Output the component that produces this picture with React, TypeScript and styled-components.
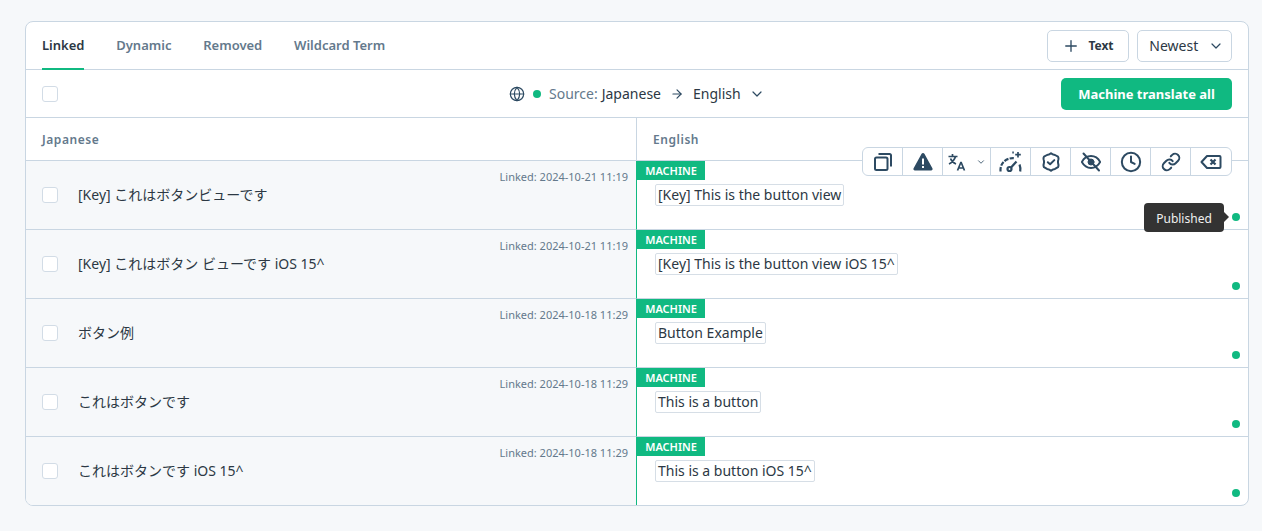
import React from "react";
import styled, { createGlobalStyle } from "styled-components";
import { Plus, ChevronDown, ArrowRight, Globe, Clock, Link as LinkIcon } from "lucide-react";

const border = "#c9d6e2";
const green = "#10b981";
const ink = "#2c3844";
const muted = "#64798c";
const iconInk = "#2d4a62";

const Global = createGlobalStyle`
  * { box-sizing: border-box; }
  html, body { margin: 0; background: #f6f8fa; }
  body { font-family: "Noto Sans", "Noto Sans CJK JP", sans-serif; color: ${ink}; }
`;

const Page = styled.div`
  width: 1262px;
  height: 531px;
  padding: 21px 13px 25px 25px;
`;
const Card = styled.div`
  position: relative;
  width: 1224px;
  height: 485px;
  border: 1px solid ${border};
  border-radius: 8px;
  background: #fff;
  overflow: hidden;
`;
const TabBar = styled.div`
  height: 48px;
  padding: 0 16px;
  display: flex;
  align-items: stretch;
  justify-content: space-between;
  border-bottom: 1px solid ${border};
`;
const Tabs = styled.div`
  display: flex;
  gap: 31.75px;
`;
const Tab = styled.div<{ $active?: boolean }>`
  display: flex;
  align-items: center;
  font-size: 13px;
  font-weight: 600;
  height: 48px;
  color: ${(p) => (p.$active ? ink : muted)};
  border-bottom: 2px solid ${(p) => (p.$active ? green : "transparent")};
`;
const TabActions = styled.div`
  display: flex;
  align-items: center;
  gap: 8px;
`;
const OutlineButton = styled.div<{ $w: number }>`
  width: ${(p) => p.$w}px;
  height: 32px;
  border: 1px solid ${border};
  border-radius: 5px;
  display: flex;
  align-items: center;
  justify-content: center;
  background: #fff;
`;
const TextLabel = styled.span`
  font-size: 12px;
  font-weight: 700;
  margin-left: 8px;
`;
const SortLabel = styled.span`
  font-size: 14px;
  margin: 0 9.5px 0 4px;
`;
const SourceBar = styled.div`
  position: relative;
  height: 48px;
  padding: 0 16px;
  display: flex;
  align-items: center;
  justify-content: space-between;
  border-bottom: 1px solid ${border};
`;
const Check = styled.span`
  flex: none;
  width: 16px;
  height: 16px;
  border: 1px solid #d2dce6;
  border-radius: 3px;
  background: #fff;
`;
const LangGroup = styled.div`
  position: absolute;
  left: 483px;
  top: 0;
  height: 47px;
  display: flex;
  align-items: center;
  font-size: 14px;
  white-space: nowrap;
`;
const Dot = styled.span`
  flex: none;
  width: 8px;
  height: 8px;
  border-radius: 50%;
  background: ${green};
`;
const SourceLabel = styled.span`
  color: ${muted};
  margin: 0 4px 0 8px;
`;
const MachineAll = styled.div`
  width: 171px;
  height: 32px;
  border-radius: 5px;
  background: ${green};
  color: #fff;
  font-size: 13px;
  font-weight: 700;
  display: flex;
  align-items: center;
  justify-content: center;
`;
const Grid = styled.div`
  display: grid;
  grid-template-columns: 610px 1fr;
`;
const HeadCell = styled.div<{ $right?: boolean }>`
  height: 43px;
  display: flex;
  align-items: center;
  padding-left: 16px;
  font-size: 12px;
  font-weight: 600;
  letter-spacing: 0.55px;
  color: ${muted};
  border-bottom: 1px solid ${border};
  border-left: ${(p) => (p.$right ? `1px solid ${border}` : "none")};
`;
const LeftCell = styled.div<{ $last?: boolean }>`
  position: relative;
  height: ${(p) => (p.$last ? 68 : 69)}px;
  background: #f6f8fa;
  display: flex;
  align-items: center;
  padding: 0 0 0 16px;
  gap: 20px;
  font-size: 14px;
  border-bottom: ${(p) => (p.$last ? "none" : `1px solid ${border}`)};
`;
const RowText = styled.span`
  position: relative;
  top: -1px;
`;
const Linked = styled.span`
  position: absolute;
  top: 8px;
  right: 8px;
  font-size: 11px;
  color: ${muted};
`;
const RightCell = styled.div<{ $last?: boolean }>`
  position: relative;
  height: ${(p) => (p.$last ? 68 : 69)}px;
  padding: 22px 0 0 18px;
  border-left: 1px solid ${green};
  border-bottom: ${(p) => (p.$last ? "none" : `1px solid ${border}`)};
`;
const MachineTag = styled.span`
  position: absolute;
  left: 0;
  top: 0;
  width: 68px;
  height: 19px;
  background: ${green};
  color: #fff;
  font-size: 11px;
  font-weight: 600;
  line-height: 19px;
  text-align: center;
`;
const Segment = styled.span`
  display: inline-block;
  height: 22px;
  line-height: 20px;
  padding: 0 2px;
  font-size: 14px;
  background: #fff;
  border: 1px solid #d6dee6;
  border-radius: 2px;
  white-space: nowrap;
`;
const StatusDot = styled(Dot)`
  position: absolute;
  right: 8px;
  bottom: 8px;
`;
const Toolbar = styled.div`
  position: absolute;
  left: 836px;
  top: 125px;
  height: 29px;
  display: flex;
  background: #fff;
  border: 1px solid ${border};
  border-radius: 6px;
  color: ${iconInk};
`;
const ToolCell = styled.div<{ $w?: number; $gap?: number }>`
  width: ${(p) => p.$w ?? 40}px;
  display: flex;
  align-items: center;
  justify-content: center;
  gap: ${(p) => p.$gap ?? 0}px;
  border-left: 1px solid ${border};
  &:first-child { border-left: 0; width: 39px; }
`;
const Tooltip = styled.div`
  position: absolute;
  left: 1118px;
  top: 181px;
  width: 80px;
  height: 29px;
  padding-top: 1px;
  border-radius: 4px;
  background: #333;
  color: #f0f0f0;
  font-size: 12px;
  display: flex;
  align-items: center;
  justify-content: center;
  &::after {
    content: "";
    position: absolute;
    right: -5px;
    top: 9px;
    border-left: 5px solid #333;
    border-top: 5px solid transparent;
    border-bottom: 5px solid transparent;
  }
`;

const CopyIcon = () => (
  <svg width="20" height="20" viewBox="0 0 20 20" fill="none" stroke="currentColor" strokeWidth="2">
    <rect x="2" y="5.500" width="12.500" height="12.500" rx="1.500" />
    <path d="M5.500 2h11a1.500 1.500 0 0 1 1.500 1.500v11" />
  </svg>
);
const WarnIcon = () => (
  <svg width="20" height="20" viewBox="0 0 20 20">
    <path fill="currentColor" fillRule="evenodd" d="M10 1c.6 0 1.100.3 1.400.8l8 14.500c.6 1-.1 2.200-1.300 2.200H1.900c-1.200 0-1.900-1.200-1.300-2.200l8-14.500C8.900 1.300 9.400 1 10 1zM9 6.500v6h2v-6zM9 14v2h2v-2z" />
  </svg>
);
const TranslateIcon = () => (
  <svg width="18" height="18" viewBox="0 0 18 18" fill="none" stroke="currentColor" strokeWidth="1.700">
    <path d="M0.500 3.500h9M4.500 1v2.500M7.500 3.500C6.500 7 4 9.500 1 11M2.500 5.500c1 2.500 3 4.500 5.500 5.500" />
    <path d="M9.500 17.500l3.300-8h.4l3.300 8M10.700 15h4.600" />
  </svg>
);
const GaugeIcon = () => (
  <svg width="24" height="22" viewBox="0 0 24 22" fill="none" stroke="currentColor" strokeWidth="2.200" strokeLinecap="butt">
    <path d="M1.500 20.500C.8 13 6 6.800 14.800 7.200" strokeDasharray="4.500 1.300" />
    <path d="M20.500 13.500c.9 2.300 1.100 4.700.7 7" />
    <circle cx="10.500" cy="18" r="2" />
    <path d="M12 16.500l5.500-6" />
    <path d="M19 1v5.500M16.200 3.700h5.600" strokeWidth="1.700" />
    <path d="M13.300 1.500h1.500" strokeWidth="1.800" />
  </svg>
);
const ShieldIcon = () => (
  <svg width="20" height="20" viewBox="0 0 20 20" fill="none" stroke="currentColor" strokeWidth="2" strokeLinejoin="round" strokeLinecap="round">
    <path d="M10 1.200c1.200 1.200 2.600 1.600 4 1.800l3 1.700c.6 1 .6 2 .3 3-.5 1.500-.5 2.700 0 4.400.3 1 .3 2-.3 3.100l-3 1.700c-1.500.2-2.800.6-4 1.900-1.200-1.300-2.500-1.700-4-1.900l-3-1.700c-.6-1.100-.6-2.100-.3-3.100.5-1.700.5-2.900 0-4.400-.3-1-.3-2 .3-3l3-1.700c1.400-.2 2.800-.6 4-1.800z" />
    <path d="M6.800 10.200l2.300 2.100 4.200-4.200" />
  </svg>
);
const EyeIcon = () => (
  <svg width="20" height="20" viewBox="0 0 20 20" fill="none" stroke="currentColor" strokeWidth="2" strokeLinecap="round">
    <path d="M.8 10C3 6 6 4 10 4s7 2 9.200 6c-2.200 4-5.200 6-9.200 6S3 14 .8 10z" />
    <circle cx="10" cy="10" r="3" fill="currentColor" strokeWidth="1" />
    <path d="M2.500 1.500l15.500 17" />
  </svg>
);
const BackspaceIcon = () => (
  <svg width="22" height="16" viewBox="0 0 22 16" fill="none" stroke="currentColor" strokeWidth="2" strokeLinejoin="round">
    <path d="M7 2h12.500a1 1 0 0 1 1 1v10a1 1 0 0 1-1 1H7L1.500 8z" />
    <path d="M10.500 5.500l5 5M15.500 5.500l-5 5" strokeWidth="2.200" />
  </svg>
);

const rows = [
  ["[Key] これはボタンビューです", "2024-10-21 11:19", "[Key] This is the button view"],
  ["[Key] これはボタン ビューです iOS 15^", "2024-10-21 11:19", "[Key] This is the button view iOS 15^"],
  ["ボタン例", "2024-10-18 11:29", "Button Example"],
  ["これはボタンです", "2024-10-18 11:29", "This is a button"],
  ["これはボタンです iOS 15^", "2024-10-18 11:29", "This is a button iOS 15^"],
];

export default function App() {
  return (
    <Page>
      <Global />
      <Card>
        <TabBar>
          <Tabs>
            <Tab $active>Linked</Tab>
            <Tab>Dynamic</Tab>
            <Tab>Removed</Tab>
            <Tab>Wildcard Term</Tab>
          </Tabs>
          <TabActions>
            <OutlineButton $w={82}>
              <Plus size={18} color={iconInk} strokeWidth={1.8} />
              <TextLabel>Text</TextLabel>
            </OutlineButton>
            <OutlineButton $w={95}>
              <SortLabel>Newest</SortLabel>
              <ChevronDown size={16} color={iconInk} strokeWidth={1.8} />
            </OutlineButton>
          </TabActions>
        </TabBar>
        <SourceBar>
          <Check />
          <LangGroup>
            <Globe size={16} color={iconInk} strokeWidth={1.8} style={{ marginRight: 8 }} />
            <Dot />
            <SourceLabel>Source:</SourceLabel>
            <span>Japanese</span>
            <ArrowRight size={14} color={iconInk} strokeWidth={2} style={{ margin: "0 9px" }} />
            <span>English</span>
            <ChevronDown size={16} color={iconInk} strokeWidth={1.8} style={{ marginLeft: 8 }} />
          </LangGroup>
          <MachineAll>Machine translate all</MachineAll>
        </SourceBar>
        <Grid>
          <HeadCell>Japanese</HeadCell>
          <HeadCell $right>English</HeadCell>
          {rows.map((r, i) => {
            const last = i === rows.length - 1;
            return (
              <React.Fragment key={r[2]}>
                <LeftCell $last={last}>
                  <Check />
                  <RowText>{r[0]}</RowText>
                  <Linked>Linked: {r[1]}</Linked>
                </LeftCell>
                <RightCell $last={last}>
                  <MachineTag>MACHINE</MachineTag>
                  <Segment>{r[2]}</Segment>
                  <StatusDot />
                </RightCell>
              </React.Fragment>
            );
          })}
        </Grid>
        <Toolbar>
          <ToolCell><CopyIcon /></ToolCell>
          <ToolCell><WarnIcon /></ToolCell>
          <ToolCell $w={48} $gap={10}><TranslateIcon /><ChevronDown size={10} strokeWidth={2} /></ToolCell>
          <ToolCell><GaugeIcon /></ToolCell>
          <ToolCell><ShieldIcon /></ToolCell>
          <ToolCell><EyeIcon /></ToolCell>
          <ToolCell><Clock size={22} strokeWidth={2.2} /></ToolCell>
          <ToolCell><LinkIcon size={20} strokeWidth={2.4} /></ToolCell>
          <ToolCell $w={41}><BackspaceIcon /></ToolCell>
        </Toolbar>
        <Tooltip>Published</Tooltip>
      </Card>
    </Page>
  );
}
